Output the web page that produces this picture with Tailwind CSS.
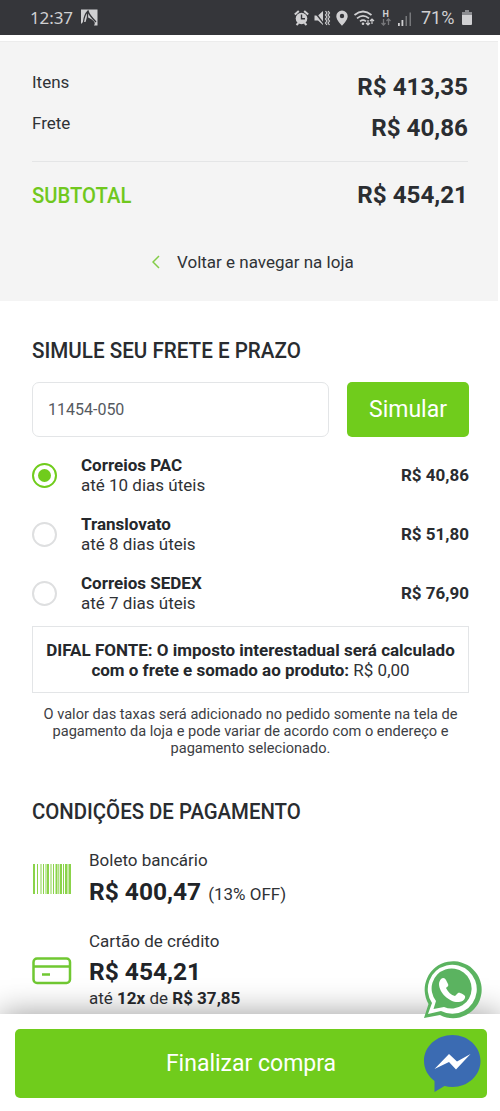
<!DOCTYPE html>
<html lang="pt-BR">
<head>
<meta charset="utf-8">
<title>Carrinho</title>
<script src="https://cdn.jsdelivr.net/npm/@tailwindcss/browser@4"></script>
</head>
<body class="bg-white">
<div class="relative flex h-[1111px] w-[500px] flex-col overflow-hidden bg-white font-['Roboto',sans-serif] text-[17px] leading-5 text-[#2f3236]">
  <header class="flex h-[35px] shrink-0 items-center bg-[#35363a] pl-[30px] pr-[28px] text-[#d0d0d2]">
    <span class="w-[43px] whitespace-nowrap font-['Noto_Sans',sans-serif] text-[17px] tracking-[-0.1px]">12:37</span>
    <svg class="ml-2" width="17" height="17" viewBox="0 0 17 17"><path fill="#d0d0d2" d="M0 .5h16.500v16h-3.500c2-3 0-4.500-3-6.500L6 8 4.500 13H2L0 15z"/><path d="M2.500 13C3 8 4 5 7 2c1 4 4 7 8 11M6.500 3v6l6 5" fill="none" stroke="#35363a" stroke-width="1.300"/></svg>
    <svg class="ml-auto" width="120" height="20" viewBox="0 0 120 20" fill="#d0d0d2">
      <circle cx="7.500" cy="10.500" r="5.800"/><path d="M.800 6.500l4-3.500M14.200 6.500l-4-3.500M2.500 17l2-2M12.500 17l-2-2" stroke="#d0d0d2" stroke-width="2"/><path d="M7.500 6.500v4.200H11" fill="none" stroke="#35363a" stroke-width="1.400"/>
      <path d="M20.500 7.500H24L29 3v14l-5-4.500h-3.500z"/><path d="M20 3l10 13" stroke="#35363a" stroke-width="1.300"/><path d="M31.500 3l1.500 2-1.500 2 1.500 2-1.500 2 1.500 2-1.500 2 1.500 2M34 3l1.500 2L34 7l1.500 2-1.500 2 1.500 2-1.500 2 1.500 2" fill="none" stroke="#d0d0d2" stroke-width="1.200"/>
      <path fill-rule="evenodd" d="M48 2.500A5.700 5.700 0 0 0 42.300 8.200c0 4 5.700 9.500 5.700 9.500s5.700-5.500 5.700-9.500A5.700 5.700 0 0 0 48 2.500zm0 3.300a2.200 2.200 0 1 1 0 4.400 2.200 2.200 0 0 1 0-4.400z"/>
      <path d="M60.500 7q8.500-7 17 0M63 10.300q6-5 12 0M66 13.300q3-2.500 6 0" fill="none" stroke="#d0d0d2" stroke-width="1.700"/><circle cx="69" cy="15.700" r="1.300"/>
      <path d="M74 12v5m-2-2l2 2 2-2M78 16v-5m-2 2l2-2 2 2" fill="none" stroke="#d0d0d2" stroke-width="1.200"/>
      <text x="88.500" y="9" font-size="9" font-weight="700">H</text><path d="M89.500 11v6m-2-2l2 2 2-2M94.500 17v-6m-2 2l2-2 2 2" fill="none" stroke="#77787b" stroke-width="1.300"/>
      <path d="M104 15h1.800v3H104zM107.500 12h1.800v6h-1.800z"/><path fill="#77787b" d="M111.500 8h1.500v10h-1.500zM115.500 4.500h1.500V18h-1.500z"/>
    </svg>
    <span class="ml-[7px] w-[37px] whitespace-nowrap text-[18px] font-normal">71%</span>
    <svg class="ml-[4px]" width="10" height="15" viewBox="0 0 10 15"><path fill="#8b8c90" d="M3 0h4v2h3v4H0V2h3z"/><path fill="#d0d0d2" d="M0 5h10v9q0 1-1 1H1q-1 0-1-1z"/></svg>
  </header>

  <section class="mt-[6px] h-[260px] w-[498px] shrink-0 border-t border-[#ececec] bg-[#f4f4f4] pl-[32px] pr-[30px] pt-[30px]">
    <div class="flex h-[41px] justify-between"><span>Itens</span><strong class="pt-[5px] text-[24.200px] font-bold text-[#2a2d31]">R$ 413,35</strong></div>
    <div class="flex h-[49px] justify-between border-b border-[#e4e5e6]"><span>Frete</span><strong class="pt-[5px] text-[24.200px] font-bold text-[#2a2d31]">R$ 40,86</strong></div>
    <div class="flex h-[66px] items-center justify-between"><span class="text-[22.500px] font-medium text-[#70c81e]"><span class="inline-block origin-left scale-x-[.9]">SUBTOTAL</span></span><strong class="text-[24.200px] font-bold text-[#2a2d31]">R$ 454,21</strong></div>
    <div class="mt-[24px] flex h-5 items-center pl-[120px]"><svg width="8" height="14" viewBox="0 0 8 14"><path d="M7 1L1 7l6 6" fill="none" stroke="#82cc46" stroke-width="1.500"/></svg><span class="ml-[17px] whitespace-nowrap text-[17px]">Voltar e navegar na loja</span></div>
  </section>

  <main class="flex flex-col pl-[32px] pr-[31px] pt-[37px]">
    <h2 class="h-6 origin-left scale-x-[.916] whitespace-nowrap text-[22.500px] font-medium leading-6 text-[#292c30]">SIMULE SEU FRETE E PRAZO</h2>
    <div class="mt-[20px] flex h-[55px] gap-[18px]">
      <div class="flex w-[297px] items-center rounded-[7px] border border-[#e3e5e7] pl-[15px] text-[16px] text-[#555a5f]">11454-050</div>
      <div class="flex h-[55px] w-[122px] items-center justify-center rounded-[5px] bg-[#70cc1c] text-[23px] text-white">Simular</div>
    </div>
    <div class="mt-[8px] flex h-[59px] items-center"><span class="mt-px flex size-[25px] items-center justify-center rounded-full border-2 border-[#70cc1c]"><i class="size-[13px] rounded-full bg-[#70cc1c]"></i></span><p class="ml-6 grow"><b class="text-[#25282c]">Correios PAC</b><br>até 10 dias úteis</p><b class="text-[#292c30]">R$ 40,86</b></div>
    <div class="flex h-[59px] items-center"><span class="mt-px size-[25px] rounded-full border-2 border-[#dedfe0]"></span><p class="ml-6 grow"><b class="text-[#25282c]">Translovato</b><br>até 8 dias úteis</p><b class="text-[#292c30]">R$ 51,80</b></div>
    <div class="flex h-[59px] items-center"><span class="mt-px size-[25px] rounded-full border-2 border-[#dedfe0]"></span><p class="ml-6 grow"><b class="text-[#25282c]">Correios SEDEX</b><br>até 7 dias úteis</p><b class="text-[#292c30]">R$ 76,90</b></div>
    <div class="mt-[4px] flex h-[67px] w-[437px] items-center justify-center border border-[#e3e5e7] text-center"><p class="whitespace-nowrap"><b class="text-[#25282c]">DIFAL FONTE: O imposto interestadual será calculado<br>com o frete e somado ao produto:</b> R$ 0,00</p></div>
    <p class="mt-[13px] whitespace-nowrap text-center text-[14.600px] leading-[17px] text-[#3d4044]">O valor das taxas será adicionado no pedido somente na tela de<br>pagamento da loja e pode variar de acordo com o endereço e<br>pagamento selecionado.</p>
    <h2 class="mt-[42px] h-6 origin-left scale-x-[.905] whitespace-nowrap text-[22.500px] font-medium leading-6 text-[#292c30]">CONDIÇÕES DE PAGAMENTO</h2>
    <div class="mt-[27px] flex h-[81px]">
      <svg class="mt-[14px]" width="40" height="30" viewBox="0 0 40 30" fill="none" stroke="#8bd34a"><path stroke-width="2" d="M2 0v30M16 0v30M24.500 0v30M29 0v30M34 0v30M38 0v30"/><path stroke-width="1" d="M5.500 0v30M9 0v30M11.500 0v30M14 0v30M19 0v30M21.500 0v30M26.800 0v30M31.500 0v30M36 0v30"/></svg>
      <div class="ml-[17px]"><div class="h-5">Boleto bancário</div><div class="mt-[12px] flex h-5 items-center gap-[7px]"><strong class="text-[24.500px] font-bold text-[#212428]">R$ 400,47</strong><span class="pt-[4px]">(13% OFF)</span></div></div>
    </div>
    <div class="flex">
      <svg class="mt-[26px]" width="40" height="28" viewBox="0 0 40 28" fill="none" stroke="#70c832"><rect x="1.500" y="1.500" width="36.500" height="24.500" rx="3.500" stroke-width="2.500"/><path d="M2 9.500h36M10 17.500h8" stroke-width="2.500"/></svg>
      <div class="ml-[17px]"><div class="h-5">Cartão de crédito</div><div class="mt-[11px] h-5"><strong class="text-[24.500px] font-bold text-[#212428]">R$ 454,21</strong></div><div class="mt-[6px] h-5">até <b class="text-[#25282c]">12x</b> de <b class="text-[#25282c]">R$ 37,85</b></div></div>
    </div>
  </main>

  <div class="absolute inset-x-0 bottom-0 h-[97px] bg-white px-[15px] pt-[15px] shadow-[0_0_30px_rgba(0,0,0,0.4)]">
    <div class="flex h-[69px] w-[472px] items-center justify-center rounded-[5px] bg-[#70cc1c] text-[23px] text-white">Finalizar compra</div>
  </div>
  <svg class="absolute left-[423px] top-[961px]" width="60" height="60" viewBox="0 0 60 60"><path fill="#5bb360" d="M1 57L5.500 43A28.500 28.500 0 1 1 17 54z"/><path fill="#fff" d="M5 53l4-11A24.500 24.500 0 1 1 18 50z"/><path fill="#5bb360" d="M10.500 48l2.500-8A20 20 0 1 1 21 46z"/><path fill="#fff" d="M18 18c2-2 4-1 5 1l2 4c1 2-1 3-2 4 2 4 5 7 9 8l3-3c2-1 6 2 7 3 1 3-3 6-6 6-9 1-20-9-20-18 0-2 1-4 2-5z"/></svg>
  <svg class="absolute left-[423px] top-[1034px]" width="60" height="60" viewBox="0 0 60 60"><path fill="#3b6bb2" d="M29.500 1C13.500 1 1 12.500 1 27c0 8 4 15 10.500 20v11l10-6c2.500.6 5.200 1 8 1C45 53 57.500 41.500 57.500 27S45 1 29.500 1z"/><path fill="#fff" d="M11.500 35L26 20l8 7.500L47.500 20 33 35.500 26 28z"/></svg>
</div>
</body>
</html>
